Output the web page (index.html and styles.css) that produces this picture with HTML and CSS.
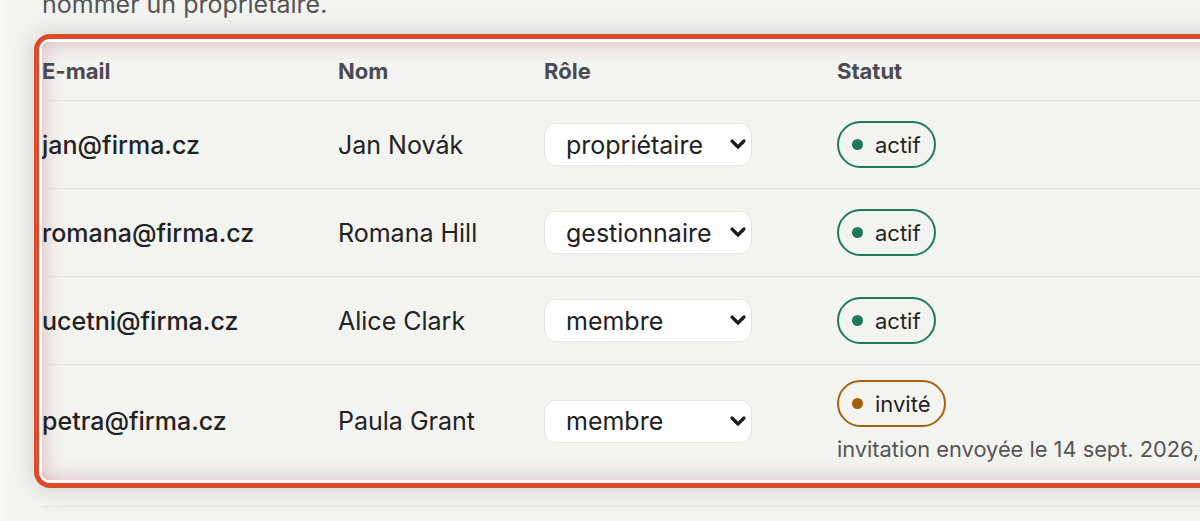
FILE: index.html
```html
<!DOCTYPE html>
<html lang="fr">
<head>
    <meta charset="UTF-8">
    <meta name="viewport" content="width=device-width, initial-scale=1.0">
    <title>Membres</title>
    <link rel="stylesheet" href="styles.css">
</head>
<body>
    <div class="page">
        <p class="intro">nommer un propriétaire.</p>
        <div class="members">
            <table>
                <tr>
                    <th class="col-email">E-mail</th>
                    <th class="col-name">Nom</th>
                    <th class="col-role">Rôle</th>
                    <th>Statut</th>
                </tr>
                <tr>
                    <td class="email">jan@firma.cz</td>
                    <td>Jan Novák</td>
                    <td>
                        <span class="select-wrap">
                            <select aria-label="Rôle">
                                <option selected>propriétaire</option>
                                <option>gestionnaire</option>
                                <option>membre</option>
                            </select>
                            <svg class="chevron" width="18" height="12" viewBox="0 0 18 12"><path d="M3 3 L9 9 L15 3" fill="none" stroke="#1c1c1c" stroke-width="3.2" stroke-linecap="round" stroke-linejoin="round"/></svg>
                        </span>
                    </td>
                    <td><span class="badge active"><span class="dot"></span>actif</span></td>
                </tr>
                <tr>
                    <td class="email">romana@firma.cz</td>
                    <td>Romana Hill</td>
                    <td>
                        <span class="select-wrap">
                            <select aria-label="Rôle">
                                <option>propriétaire</option>
                                <option selected>gestionnaire</option>
                                <option>membre</option>
                            </select>
                            <svg class="chevron" width="18" height="12" viewBox="0 0 18 12"><path d="M3 3 L9 9 L15 3" fill="none" stroke="#1c1c1c" stroke-width="3.2" stroke-linecap="round" stroke-linejoin="round"/></svg>
                        </span>
                    </td>
                    <td><span class="badge active"><span class="dot"></span>actif</span></td>
                </tr>
                <tr>
                    <td class="email">ucetni@firma.cz</td>
                    <td>Alice Clark</td>
                    <td>
                        <span class="select-wrap">
                            <select aria-label="Rôle">
                                <option>propriétaire</option>
                                <option>gestionnaire</option>
                                <option selected>membre</option>
                            </select>
                            <svg class="chevron" width="18" height="12" viewBox="0 0 18 12"><path d="M3 3 L9 9 L15 3" fill="none" stroke="#1c1c1c" stroke-width="3.2" stroke-linecap="round" stroke-linejoin="round"/></svg>
                        </span>
                    </td>
                    <td><span class="badge active"><span class="dot"></span>actif</span></td>
                </tr>
                <tr class="last">
                    <td class="email">petra@firma.cz</td>
                    <td>Paula Grant</td>
                    <td>
                        <span class="select-wrap">
                            <select aria-label="Rôle">
                                <option>propriétaire</option>
                                <option>gestionnaire</option>
                                <option selected>membre</option>
                            </select>
                            <svg class="chevron" width="18" height="12" viewBox="0 0 18 12"><path d="M3 3 L9 9 L15 3" fill="none" stroke="#1c1c1c" stroke-width="3.2" stroke-linecap="round" stroke-linejoin="round"/></svg>
                        </span>
                    </td>
                    <td>
                        <span class="badge invited"><span class="dot"></span>invité</span>
                        <div class="note">invitation envoyée le 14 sept. 2026,</div>
                    </td>
                </tr>
            </table>
        </div>
        <div class="divider"></div>
    </div>
</body>
</html>
```

FILE: styles.css
```css
html, body {
    overflow: hidden;
}
body {
    margin: 0;
    background-color: #f9f9f7;
    font-family: Inter, "Noto Sans", sans-serif;
    color: #222;
}
.page {
    box-sizing: border-box;
    margin-left: 8px;
    padding: 0 0 0 34px;
    background-color: #f3f3f0;
    height: 521px;
    width: 1192px;
    overflow: hidden;
    box-shadow: 0 0 10px rgba(0,0,0,0.05);
}
.intro {
    margin: -11px 0 0 0;
    font-size: 25px;
    line-height: 30px;
    color: #555;
}
.members {
    margin-top: 23px;
    width: 1300px;
    border-radius: 8px;
    overflow: hidden;
    box-shadow: inset 0 0 20px rgba(150,60,60,0.32), 0 0 0 3px #fff, 0 0 0 8px #dd4b2b, 0 0 24px 10px rgba(0,0,0,0.13);
}
table {
    border-collapse: collapse;
    width: 1300px;
}
th {
    text-align: left;
    font-size: 22px;
    line-height: 24px;
    font-weight: 700;
    color: #4a4a50;
    padding: 17px 0;
    border-bottom: 1px solid #e3e2de;
}
.col-email { width: 296px; }
.col-name { width: 206px; }
.col-role { width: 293px; }
td {
    font-size: 25px;
    line-height: 28px;
    padding: 20px 0;
    border-bottom: 1px solid #e3e2de;
    vertical-align: middle;
}
tr.last td {
    border-bottom: none;
    padding: 15px 0 18px;
}
.email {
    font-weight: 500;
}
.select-wrap {
    position: relative;
    display: inline-block;
    vertical-align: middle;
}
select {
    display: block;
    width: 208px;
    height: 43px;
    font-family: inherit;
    font-size: 25px;
    color: #222;
    background-color: #fff;
    border: 1px solid #e6e5e1;
    border-radius: 12px;
    padding: 0 40px 0 21px;
    appearance: none;
}
.chevron {
    position: absolute;
    right: 5px;
    top: 15px;
    pointer-events: none;
}
.badge {
    display: inline-flex;
    align-items: center;
    gap: 12px;
    height: 43px;
    padding: 0 13px;
    border: 2px solid;
    border-radius: 24px;
    font-size: 22px;
}
.badge .dot {
    width: 11px;
    height: 11px;
    border-radius: 50%;
}
.active { border-color: #1f7a57; }
.active .dot { background-color: #1a7a55; }
.invited { border-color: #a5620f; }
.invited .dot { background-color: #a25e08; }
.note {
    margin-top: 9px;
    font-size: 21.8px;
    line-height: 26px;
    color: #555;
    white-space: nowrap;
}
.divider {
    margin-top: 26px;
    border-top: 1px solid #e3e2de;
}
```
